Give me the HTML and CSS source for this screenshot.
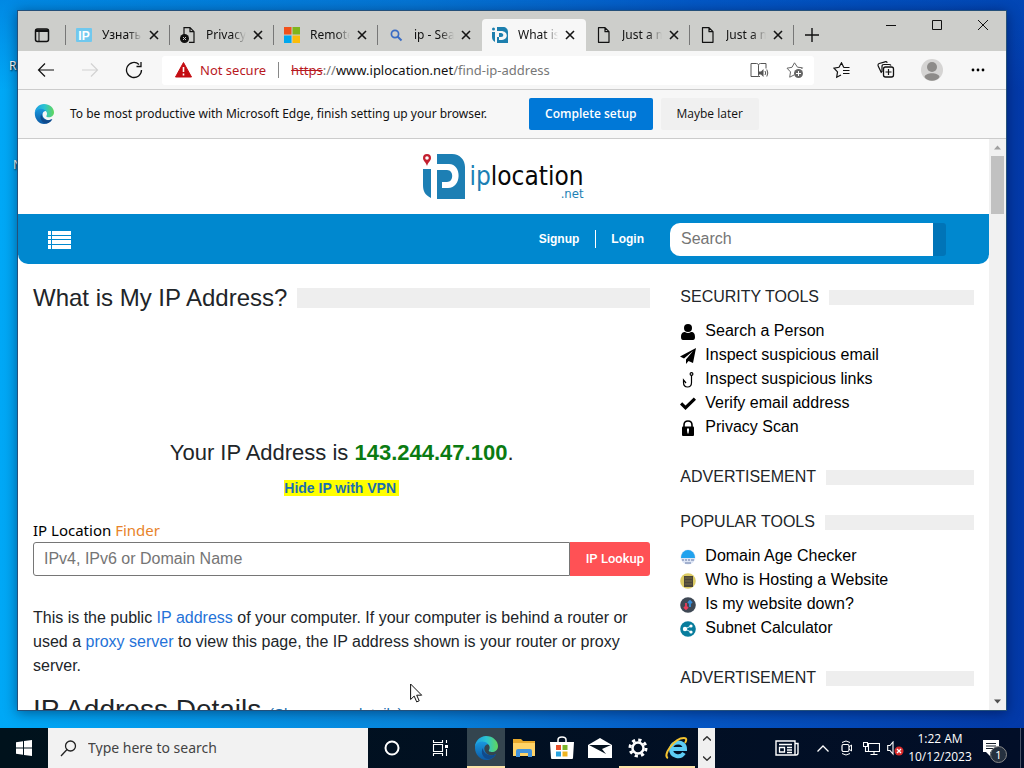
FILE: index.html
```html
<!DOCTYPE html>
<html lang="en">
<head>
<meta charset="utf-8">
<title>What is My IP Address?</title>
<link rel="stylesheet" href="styles.css">
</head>
<body>
<svg class="defs" width="0" height="0" aria-hidden="true">
  <defs>
    <linearGradient id="edge-a" x1="0" y1="0" x2="1" y2="0"><stop offset="0" stop-color="#1b9de2"/><stop offset=".5" stop-color="#2bc3d2"/><stop offset="1" stop-color="#62d75a"/></linearGradient>
    <linearGradient id="edge-b" x1="0" y1="0" x2="0" y2="1"><stop offset="0" stop-color="#1b9de2"/><stop offset="1" stop-color="#0c59a4"/></linearGradient>
  </defs>
  <symbol id="edge" viewBox="0 0 24 24">
    <path fill="url(#edge-b)" d="M1 12c0-5 4-8 8-8 5 0 7 3 7 5-1-1-3-1-4 0-3 2-2 8 3 10 3 1 5 0 7-1-2 4-6 6-10 6C6 24 1 18 1 12z"/>
    <path fill="#114a8b" d="M9 12c-3 4 0 12 7 11 3-1 5-3 6-5-3 2-8 2-11-1-2-2-2-4-2-5z"/>
    <path fill="url(#edge-a)" d="M1 11C1 5 6 0 12 0c7 0 12 5 12 10 0 4-3 6-6 6-2 0-4-1-3-2 1-2 1-4-1-6C10 4 3 5 1 11z"/>
  </symbol>
  <symbol id="close" viewBox="0 0 10 10"><path d="M1 1l8 8M9 1L1 9" fill="none" stroke="#151515" stroke-width="1.6"/></symbol>
  <symbol id="page" viewBox="0 0 16 16"><path d="M2.500 .7h6.500l4 4v10.600h-10.500zM9 .7v4h4" fill="none" stroke="#111" stroke-width="1.2" stroke-linejoin="round"/></symbol>
</svg>

<main class="desktop">
  <span class="shortcut shortcut-first">R</span>
  <span class="shortcut shortcut-second">N</span>

  <section class="window" aria-label="Browser">
    <div class="tabstrip">
      <button class="tab-menu" aria-label="Tab actions"><svg width="16" height="16" viewBox="0 0 16 16"><rect x="1.500" y="2" width="13" height="12.500" rx="2" fill="none" stroke="#111" stroke-width="1.500"/><path d="M1.500 2.500h13v2.500h-13z" fill="#111"/><path d="M5 5v9" stroke="#111"/></svg></button>
      <div class="tabs" role="tablist">
        <div class="tab" role="tab"><svg class="favicon" viewBox="0 0 16 16"><rect y="1" width="16" height="14" rx="1" fill="#70c8ee"/><text x="8" y="12.500" text-anchor="middle" class="favicon-text">IP</text></svg><span class="tab-title">Узнать</span><button class="tab-close" aria-label="Close tab"><svg width="10" height="10"><use href="#close"/></svg></button></div>
        <div class="tab" role="tab"><svg class="favicon" viewBox="0 0 16 16"><path d="M4 8V.7h6l4 4v10.600H9M10 .7v4h4" fill="none" stroke="#111" stroke-width="1.200"/><circle cx="4.500" cy="11.500" r="4.500" fill="#111"/><path d="M3 10l3 3M6 10l-3 3" stroke="#ccc"/></svg><span class="tab-title">Privacy</span><button class="tab-close" aria-label="Close tab"><svg width="10" height="10"><use href="#close"/></svg></button></div>
        <div class="tab" role="tab"><svg class="favicon" viewBox="0 0 16 16"><path fill="#f1511b" d="M0 0h7.500v7.500H0z"/><path fill="#80b51c" d="M8.500 0H16v7.500H8.500z"/><path fill="#00a7ee" d="M0 8.500h7.500V16H0z"/><path fill="#fbbc09" d="M8.500 8.500H16V16H8.500z"/></svg><span class="tab-title">Remote</span><button class="tab-close" aria-label="Close tab"><svg width="10" height="10"><use href="#close"/></svg></button></div>
        <div class="tab before-active" role="tab"><svg class="favicon" viewBox="0 0 16 16"><circle cx="7" cy="7" r="3.600" fill="none" stroke="#3a6cc4" stroke-width="1.700"/><path d="M9.500 9.500l4 4" stroke="#3a6cc4" stroke-width="2"/></svg><span class="tab-title">ip - Search</span><button class="tab-close" aria-label="Close tab"><svg width="10" height="10"><use href="#close"/></svg></button></div>
        <div class="tab active" role="tab" aria-selected="true"><svg class="favicon" viewBox="0 0 16 16"><path fill="#1d7fae" d="M0 5h3v10C1 14 0 12 0 10zM5 0h6c3 0 5 2 5 5v11H5V10h2v3c10 1 10-9 2-9H5z"/><path fill="#1d7fae" d="M7 6h2c3 0 3 4 0 4H7z"/><circle cx="1.500" cy="2" r="1.500" fill="#1d7fae"/></svg><span class="tab-title">What is</span><button class="tab-close" aria-label="Close tab"><svg width="10" height="10"><use href="#close"/></svg></button></div>
        <div class="tab" role="tab"><svg class="favicon"><use href="#page"/></svg><span class="tab-title">Just a moment</span><button class="tab-close" aria-label="Close tab"><svg width="10" height="10"><use href="#close"/></svg></button></div>
        <div class="tab" role="tab"><svg class="favicon"><use href="#page"/></svg><span class="tab-title">Just a moment</span><button class="tab-close" aria-label="Close tab"><svg width="10" height="10"><use href="#close"/></svg></button></div>
      </div>
      <button class="new-tab" aria-label="New tab"><svg width="14" height="14" viewBox="0 0 14 14"><path d="M7 0v14M0 7h14" stroke="#111" stroke-width="1.400"/></svg></button>
      <div class="caption">
        <button aria-label="Minimize"><svg width="10" height="10"><path d="M0 5.500h10" stroke="#111"/></svg></button>
        <button aria-label="Maximize"><svg width="10" height="10"><path d="M.5.5h9v9h-9z" fill="none" stroke="#111"/></svg></button>
        <button aria-label="Close window"><svg width="10" height="10"><path d="M0 0l10 10M10 0L0 10" stroke="#111"/></svg></button>
      </div>
    </div>

    <div class="toolbar">
      <button aria-label="Back"><svg width="18" height="16" viewBox="0 0 18 16"><path d="M17 8H1.500M8 1.500L1.500 8 8 14.500" fill="none" stroke="#111" stroke-width="1.200"/></svg></button>
      <button aria-label="Forward" disabled><svg width="18" height="16" viewBox="0 0 18 16"><path d="M1 8h15.500M10 1.500L16.500 8 10 14.500" fill="none" stroke="#d2d2d2" stroke-width="1.200"/></svg></button>
      <button aria-label="Refresh"><svg width="18" height="18" viewBox="0 0 18 18"><path d="M16.500 9a7.500 7.500 0 1 1-2.500-5.600M16 1v4.500h-4.500" fill="none" stroke="#111" stroke-width="1.300"/></svg></button>
      <div class="address">
        <svg width="17" height="16" viewBox="0 0 17 16"><path d="M8.500.5l8 14.500H.5z" fill="#c40d12" stroke="#c40d12" stroke-linejoin="round"/><path d="M8.500 5v5M8.500 11.500v2" stroke="#fff" stroke-width="1.600"/></svg>
        <span class="not-secure">Not secure</span>
        <div class="url" role="textbox" aria-label="Address" tabindex="0"><s>https</s><span class="dim">://</span>www.iplocation.net<span class="dim">/find-ip-address</span></div>
        <button aria-label="Immersive reader"><svg width="19" height="16" viewBox="0 0 19 16"><path d="M8.500 14.500h-7.500v-13h5.500c1.500 0 2 1 2 2v10c0 1-.5 1-1 1M8.500 3.500c0-1 .5-2 2-2h5.500v5M10 14.500H8.500" fill="none" stroke="#555"/><path d="M9 9.500h2l2.500-2.500v8L11 12.500H9z" fill="#555"/><path d="M15 9q1.500 2 0 4M16.800 7.500q2 3.500 0 7" fill="none" stroke="#555"/></svg></button>
        <button aria-label="Add to favorites"><svg width="18" height="17" viewBox="0 0 18 17"><path d="M15.500 7l1-1.200-5-.6L8.500.8 6 5.300l-5 .9 3.500 3.700-.8 5.300L8 13" fill="none" stroke="#666"/><circle cx="12.500" cy="11.500" r="4.500" fill="#666"/><path d="M12.500 9v5M10 11.500h5" stroke="#fff"/></svg></button>
      </div>
      <div class="tools">
        <button aria-label="Favorites"><svg width="18" height="17" viewBox="0 0 18 17"><path d="M8 13l-4.300 2.200.8-5.300L1 6.200l5-.9L8.500.8l2.200 4.400M10 8.500h6.500M10 11.500h6.500M10.500 5.500h6" fill="none" stroke="#111" stroke-width="1.200"/></svg></button>
        <button aria-label="Collections"><svg width="18" height="18" viewBox="0 0 18 18"><rect x="6.500" y="6" width="10" height="10" rx="2" fill="none" stroke="#111" stroke-width="1.300"/><path d="M11.500 8v6M8.500 11h6M4.500 12L1.200 5q-.6-2 1-2.500L8 .8q1.600-.4 2.300 1M5 11V5.500q0-2 2-2h5q1.500 0 2 1" fill="none" stroke="#111" stroke-width="1.200"/></svg></button>
        <button class="profile" aria-label="Profile"><svg width="22" height="22" viewBox="0 0 22 22"><circle cx="11" cy="11" r="11" fill="#d5d4d3"/><circle cx="11" cy="8" r="5" fill="#8d8b89"/><path d="M3.500 18c1-5 14-5 15 0-3 5-12 5-15 0z" fill="#8d8b89"/></svg></button>
        <button aria-label="Settings and more"><svg width="14" height="4"><circle cx="2" cy="2" r="1.400"/><circle cx="7" cy="2" r="1.400"/><circle cx="12" cy="2" r="1.400"/></svg></button>
      </div>
    </div>

    <div class="infobar">
      <svg width="20" height="20"><use href="#edge"/></svg>
      <p>To be most productive with Microsoft Edge, finish setting up your browser.</p>
      <button class="setup">Complete setup</button>
      <button class="later">Maybe later</button>
    </div>

    <div class="viewport">
      <div class="site">
        <header class="brand">
          <a href="#" class="logo" aria-label="iplocation.net">
            <svg width="42" height="46" viewBox="0 0 42 46"><path fill="#1d7fb4" d="M0 15h8v29C2 41 0 37 0 31zM14 0h15c8 0 13 6 13 13v32H14z"/><path fill="#fff" d="M13 10h13c13 0 13 24-1 24h-6v-6h5c7 0 7-12 0-12H13z"/><path fill="#c31f2f" d="M4 0a4 4 0 0 1 4 4c0 3-3 4-4 8-1-4-4-5-4-8a4 4 0 0 1 4-4z"/><circle cx="4" cy="4" r="1.800" fill="#fff"/></svg>
            <span class="wordmark"><span class="name"><span class="ip">ip</span>location</span><span class="net">.net</span></span>
          </a>
        </header>
        <nav class="nav">
          <button class="menu" aria-label="Menu"><svg width="23" height="18" viewBox="0 0 23 18"><path d="M0 0h3v4H0zM4 0h19v4H4zM0 5h3v3H0zM4 5h19v3H4zM0 9h3v4H0zM4 9h19v4H4zM0 14h3v4H0zM4 14h19v4H4z" fill="#fff"/></svg></button>
          <a href="#" class="signup">Signup</a>
          <a href="#" class="login">Login</a>
          <form class="site-search"><input type="text" placeholder="Search" aria-label="Search"><button type="button" aria-label="Submit search"></button></form>
        </nav>
        <div class="columns">
          <div class="content">
            <h1 class="ruled title">What is My IP Address?</h1>
            <p class="your-ip">Your IP Address is <b>143.244.47.100</b>.</p>
            <p class="vpn"><a href="#">Hide IP with VPN</a></p>
            <label class="finder-label" for="lookup">IP Location <span>Finder</span></label>
            <form class="finder"><input id="lookup" type="text" placeholder="IPv4, IPv6 or Domain Name"><button type="button">IP Lookup</button></form>
            <p class="about">This is the public <a href="#">IP address</a> of your computer. If your computer is behind a router or used a <a href="#">proxy server</a> to view this page, the IP address shown is your router or proxy server.</p>
            <h2 class="details">IP Address Details <a href="#">(Show more details)</a></h2>
          </div>
          <aside class="side">
            <h3 class="ruled">SECURITY TOOLS</h3>
            <ul>
              <li><svg viewBox="0 0 16 16"><circle cx="8" cy="4" r="4"/><path d="M1 13c0-4 2-5 4-5q3 2 6 0c3 0 4 2 4 5q0 3-2 3H3q-2 0-2-3z"/></svg><a href="#">Search a Person</a></li>
              <li><svg viewBox="0 0 16 16"><path d="M16 0L0 8.500l4 2L13 3l-7 8.500V16l2.500-3 4.500 2z"/></svg><a href="#">Inspect suspicious email</a></li>
              <li><svg viewBox="0 0 16 16"><g fill="none" stroke="#000" stroke-width="1.200"><circle cx="11.500" cy="2" r="1.400"/><path d="M11.500 3.500v7c0 6-8 6-8 0V8l2.500 3"/></g></svg><a href="#">Inspect suspicious links</a></li>
              <li><svg viewBox="0 0 16 16"><path d="M0 8.500L2.200 6.200 5.500 9.500 13.800 1.500 16 3.700 5.500 14z"/></svg><a href="#">Verify email address</a></li>
              <li><svg viewBox="0 0 16 16"><path d="M4 7V5q0-4 4-4t4 4v2" fill="none" stroke="#000" stroke-width="1.600"/><rect x="2" y="6.500" width="12" height="9.500" rx="1"/><path d="M7 8.500h2v2l-.5 3h-1l-.5-3z" fill="#fff"/></svg><a href="#">Privacy Scan</a></li>
            </ul>
            <h3 class="ruled after-list">ADVERTISEMENT</h3>
            <h3 class="ruled popular">POPULAR TOOLS</h3>
            <ul>
              <li><svg viewBox="0 0 16 16"><circle cx="8" cy="8" r="7.500" fill="#dde5f5"/><path d="M1 9a7 8 0 0 1 14 0z" fill="#21a2ee"/><path d="M2 11h2m1 0h2m1 0h2m1 0h3M5 14h6" stroke="#667ba6"/></svg><a href="#">Domain Age Checker</a></li>
              <li><svg viewBox="0 0 16 16"><circle cx="8" cy="8" r="7.800" fill="#dccb64"/><path d="M4 3h9v11H4z" fill="#4c4639"/><path d="M5 5h7M5 8h7M5 11h7" stroke="#756a47"/></svg><a href="#">Who is Hosting a Website</a></li>
              <li><svg viewBox="0 0 16 16"><circle cx="8" cy="8" r="7.800" fill="#3e4854"/><path d="M6 6v6M4 10l2 2 2-2" stroke="#ec3d5b" stroke-width="1.800" fill="none"/><path d="M10 10V4M8 6l2-2 2 2" stroke="#368ed9" stroke-width="1.800" fill="none"/></svg><a href="#">Is my website down?</a></li>
              <li><svg viewBox="0 0 16 16"><circle cx="8" cy="8" r="7.800" fill="#087d9d"/><path d="M11 5L5 8l6 3" stroke="#d9f7ff" fill="none"/><circle cx="5" cy="8" r="2.200" fill="#fff"/><circle cx="11" cy="5" r="1.600" fill="#fff"/><circle cx="11" cy="11" r="1.600" fill="#fff"/></svg><a href="#">Subnet Calculator</a></li>
            </ul>
            <h3 class="ruled after-list">ADVERTISEMENT</h3>
          </aside>
        </div>
      </div>
      <div class="scrollbar" aria-hidden="true">
        <svg width="17" height="17"><path d="M5 10.500l3.500-4 3.500 4z" fill="#a0a0a0"/></svg>
        <div class="thumb"></div>
        <svg width="17" height="17"><path d="M5 6.500l3.500 4 3.500-4z" fill="#505050"/></svg>
      </div>
    </div>
  </section>
  <svg class="cursor" width="13" height="20" viewBox="0 0 13 20"><path d="M.6 1v15.500l3.600-3.400 2.500 5.800 2.500-1.100-2.500-5.600h5z" fill="#fff" stroke="#111"/></svg>
</main>

<footer class="taskbar">
  <button class="start" aria-label="Start"><svg width="16" height="16" viewBox="0 0 16 16"><path d="M0 2.200L7 1.200v6.300H0zM8 1l8-1v7.500H8zM0 8.500h7v6.300l-7-1zM8 8.500h8V16l-8-1z" fill="#fff"/></svg></button>
  <label class="task-search"><svg width="17" height="17" viewBox="0 0 17 17"><circle cx="10.500" cy="6" r="5" fill="none" stroke="#222" stroke-width="1.300"/><path d="M7 9.500L1 16" stroke="#222" stroke-width="1.300"/></svg><input type="text" placeholder="Type here to search" aria-label="Type here to search"></label>
  <button class="wide" aria-label="Cortana"><svg width="16" height="16"><circle cx="8" cy="8" r="6.500" fill="none" stroke="#fff" stroke-width="2"/></svg></button>
  <button class="wide" aria-label="Task view"><svg width="17" height="16" viewBox="0 0 17 16"><path d="M1.500 4.500h9v7h-9zM1.500 0v2.500h9V0M1.500 16v-2.500h9V16M14.500 0v3M14.500 9v7" fill="none" stroke="#fff" stroke-width="1.100"/><path d="M13 5h3v3h-3z" fill="#fff"/></svg></button>
  <div class="apps">
    <button class="open current" aria-label="Edge"><svg width="24" height="24"><use href="#edge"/></svg></button>
    <button aria-label="File Explorer"><svg width="22" height="20" viewBox="0 0 22 20"><path d="M0 1h8l2 2h12v15H0z" fill="#e8a92c"/><path d="M0 5h22v13H0z" fill="#ffd367"/><path d="M3 19v-6q0-2 2-2h12q2 0 2 2v6h-4v-4H7v4z" fill="#4293dc"/></svg></button>
    <button aria-label="Store"><svg width="24" height="24" viewBox="0 0 24 24"><path d="M8 6V4q0-3 4-3t4 3v2" fill="none" stroke="#fff" stroke-width="1.500"/><path d="M0 6h24l-1 16q0 1-1 1H2q-1 0-1-1z" fill="#fff"/><path d="M6 9h5v5H6z" fill="#e9502b"/><path d="M12.500 9h5v5h-5z" fill="#7cb42b"/><path d="M6 15.500h5v5H6z" fill="#28a3df"/><path d="M12.500 15.500h5v5h-5z" fill="#eeb421"/></svg></button>
    <button aria-label="Mail"><svg width="24" height="20" viewBox="0 0 24 20"><path d="M0 7l12-7 12 7v13H0z" fill="#fff"/><path d="M1 7h22l-9 4 4 5z" fill="#061320"/></svg></button>
    <button class="open" aria-label="Settings"><svg width="20" height="20" viewBox="0 0 20 20"><circle cx="10" cy="10" r="5.500" fill="none" stroke="#fff" stroke-width="2.500"/><circle cx="10" cy="10" r="8" fill="none" stroke="#fff" stroke-width="3" stroke-dasharray="3.200 3.080"/></svg></button>
    <button class="open" aria-label="Internet Explorer"><svg width="24" height="24" viewBox="0 0 24 24"><path d="M20 17c-4 6-13 3-13-4 0-8 14-9 14 0H9" fill="none" stroke="#5dcdf4" stroke-width="4"/><path d="M4 22C-2 20 10 2 20 2q4 0 1 5" fill="none" stroke="#f4c430" stroke-width="2"/></svg></button>
  </div>
  <div class="spinner"><button aria-label="Scroll up"><svg width="8" height="5"><path d="M0 4.500L4 .8l4 3.700" fill="none" stroke="#333" stroke-width="1.500"/></svg></button><button aria-label="Scroll down"><svg width="8" height="5"><path d="M0 .5l4 3.700L8 .5" fill="none" stroke="#333" stroke-width="1.500"/></svg></button></div>
  <div class="tray">
    <button class="news" aria-label="News"><svg width="24" height="16" viewBox="0 0 24 16"><path d="M1 1h19v14H1zM20 3.500h3V13q0 2-2 2h-2" fill="none" stroke="#fff" stroke-width="1.400"/><path d="M4 4.500h13M12 7.500h5M12 10h5M12 12.500h5M4.500 7.500h5v4.500h-5z" fill="none" stroke="#fff" stroke-width="1.300"/></svg></button>
    <button aria-label="Show hidden icons"><svg width="12" height="7"><path d="M.5 6.500L6 1l5.500 5.500" fill="none" stroke="#fff" stroke-width="1.300"/></svg></button>
    <button aria-label="Meet now"><svg width="14" height="16" viewBox="0 0 14 16"><rect x="2" y="4.500" width="7" height="7" rx="1.500" fill="none" stroke="#fff" stroke-width="1.200"/><path d="M9 7l2.500-2v6L9 9M2 2.500q4-3 8 0M2 13.500q4 3 8 0" fill="none" stroke="#fff"/></svg></button>
    <button aria-label="Network"><svg width="17" height="15" viewBox="0 0 17 15"><path d="M5.500 2.500h11v8h-11zM11 10.500v3M7.500 13.500h7M.5 1.500h4v4h-4zM2.500 5.500v5h3" fill="none" stroke="#fff" stroke-width="1.100"/></svg></button>
    <button aria-label="Volume"><svg width="17" height="15" viewBox="0 0 17 15"><path d="M.7 4.500h2.300l3-3.500v12L3 9.500H.7z" fill="none" stroke="#fff" stroke-width="1.100"/><circle cx="12" cy="10" r="4.500" fill="#d92a2a"/><path d="M10 8l4 4M14 8l-4 4" stroke="#fff" stroke-width="1.300"/></svg></button>
    <time class="clock"><span>1:22 AM</span><span>10/12/2023</span></time>
    <button class="notices" aria-label="Notifications"><svg width="17" height="16" viewBox="0 0 17 16"><path d="M0 0h16v12H7v4l-4-4H0z" fill="#fff"/><path d="M3 3.500h10M3 6h10M3 8.500h7" stroke="#17202c"/></svg><span class="badge">1</span></button>
  </div>
</footer>
</body>
</html>
```
FILE: styles.css
```css
* { box-sizing: border-box; }
body {
  margin: 0;
  height: 100vh;
  display: flex;
  flex-direction: column;
  overflow: hidden;
  font: 12px/16px "Noto Sans", sans-serif;
  color: #111;
}
button, input { font: inherit; color: inherit; border: 0; margin: 0; padding: 0; background: none; }
button { display: flex; align-items: center; justify-content: center; flex: none; }
h1, h2, h3, p, ul { margin: 0; padding: 0; font-weight: normal; }
a { color: inherit; text-decoration: none; }
svg { display: block; flex: none; }
.defs { position: absolute; }

.desktop {
  flex: 1;
  min-height: 0;
  position: relative;
  display: flex;
  padding: 10px 17px 17px;
  background:
    linear-gradient(180deg, rgba(0, 90, 200, .4), transparent 90px),
    linear-gradient(90deg, #00a8f6 0, #0886dc 40%, #0556c4 68%, #0339a8 100%);
}
.shortcut { position: absolute; color: #fff; text-shadow: 1px 1px 2px #000; }
.shortcut-first { left: 9px; top: 58px; }
.shortcut-second { left: 13px; top: 157px; }
.window {
  position: relative;
  flex: 1;
  min-width: 0;
  display: flex;
  flex-direction: column;
  border: 1px solid #24507a;
  background: #fff;
  box-shadow: 0 2px 12px rgba(0, 0, 30, .45);
}
.tabstrip { flex: none; display: flex; height: 40px; background: #cdcecb; }
.tab-menu { width: 47px; padding-top: 8px; }
.tabs { display: flex; align-items: flex-end; border-left: 1px solid transparent; }
.tab { display: flex; align-items: center; width: 104px; height: 32px; padding: 0 11px 0 10px; position: relative; }
.tab::after { content: ""; position: absolute; right: 0; top: 6px; width: 1px; height: 20px; background: #777; }
.tab:first-child::before { content: ""; position: absolute; left: -1px; top: 6px; width: 1px; height: 20px; background: #777; }
.tab.before-active::after, .tab.active::after { display: none; }
.tab.active { background: #f7f7f7; border-radius: 4px 4px 0 0; }
.favicon { width: 16px; height: 16px; }
.favicon-text { font: bold 12px "Liberation Sans", sans-serif; fill: #fff; }
.tab-title {
  flex: 1;
  margin: 0 7px 0 10px;
  overflow: hidden;
  white-space: nowrap;
  -webkit-mask-image: linear-gradient(90deg, #000 65%, transparent);
  mask-image: linear-gradient(90deg, #000 65%, transparent);
}
.new-tab { width: 36px; padding-top: 8px; }
.caption { display: flex; margin-left: auto; height: 28px; }
.caption button { width: 46px; }

.toolbar { flex: none; display: flex; align-items: center; height: 39px; padding-left: 6px; background: #f7f7f7; border-bottom: 1px solid #ccc; }
.toolbar > button { width: 44px; height: 30px; }
.address { flex: 1; min-width: 0; display: flex; align-items: center; height: 29px; margin-left: 6px; padding: 0 1px 0 13px; background: #fff; border-radius: 3px; font-size: 13px; }
.address button { width: 36px; height: 28px; }
.not-secure { margin-left: 8px; padding-right: 12px; color: #b8191e; border-right: 1px solid #888; white-space: nowrap; }
.url { flex: 1; padding-left: 12px; white-space: nowrap; }
.url s { color: #b8191e; }
.dim { color: #777; }
.tools { display: flex; padding: 0 6px; }
.tools button { width: 44px; }
.tools .profile { width: 48px; }

.infobar { flex: none; display: flex; align-items: center; height: 49px; padding: 0 16px; background: #f7f7f7; border-bottom: 1px solid #ccc; }
.infobar p { margin: 0 42px 0 16px; white-space: nowrap; }
.infobar button { height: 32px; padding: 0 16px; border-radius: 2px; white-space: nowrap; font-family: "Open Sans", sans-serif; font-weight: 600; }
.infobar .setup { background: #0078d7; color: #fff; }
.infobar .later { margin-left: 8px; background: #f0f0f0; font-weight: 500; }

.viewport { flex: 1; min-height: 0; display: flex; }
.site { flex: 1; min-width: 0; overflow: hidden; font: 16px/24px "Liberation Sans", Arial, sans-serif; color: #212529; }
.scrollbar { display: flex; flex-direction: column; width: 17px; background: #f1f1f1; }
.thumb { height: 58px; margin: 0 2px auto; background: #c1c1c1; }

.brand { display: flex; justify-content: center; padding: 15px 0 14px; }
.logo { display: flex; gap: 4px; }
.wordmark { display: flex; flex-direction: column; align-items: flex-end; padding-top: 8px; font-family: "DejaVu Sans Condensed", "DejaVu Sans", sans-serif; font-stretch: condensed; color: #080808; }
.name { font-size: 26px; line-height: 28px; }
.net { font-size: 13px; line-height: 8px; color: #1d7fb4; }
.ip { color: #1d7fb4; }
.nav { display: flex; align-items: center; height: 50px; padding: 0 43px 0 30px; background: #0088cf; border-radius: 0 0 10px 10px; color: #fff; }
.menu { margin-right: auto; padding-top: 2px; }
.signup, .login { font-size: 12px; line-height: 18px; font-weight: bold; }
.signup { padding-right: 16px; border-right: 1px solid #fff; }
.login { padding-left: 15px; }
.site-search { display: flex; width: 276px; height: 33px; margin-left: 26px; }
.site-search input { flex: 1; min-width: 0; padding: 0 11px; background: #fff; border-radius: 10px 0 0 10px; color: #333; }
.site-search button { width: 13px; background: #0074b7; border-radius: 0 3px 3px 0; }
input::placeholder { color: #757575; opacity: 1; }

.columns { display: grid; grid-template-columns: 2fr 1fr; }
.content, .side { min-width: 0; padding: 0 15px; }
.ruled { display: flex; align-items: center; gap: 10px; white-space: nowrap; }
.ruled::after { content: ""; flex: 1; height: 15px; background: #eee; }
.title { padding-top: 18px; font-size: 24px; line-height: 32px; }
.title::after { height: 20px; }
.your-ip { margin-top: 123px; font-size: 22px; line-height: 32px; text-align: center; }
.your-ip b { color: #0b7b12; }
.vpn { margin-top: 7px; text-align: center; font-size: 14px; font-weight: bold; }
.vpn a { background: #ff0; color: #1a6fb0; padding-right: 3px; }
.finder-label { display: block; margin-top: 18px; font: 15px/24px "Noto Sans", sans-serif; color: #000; }
.finder-label span { color: #e8832a; }
.finder { display: flex; height: 34px; }
.finder input { flex: 1; min-width: 0; padding: 0 10px; border: 1px solid #767676; border-radius: 3px 0 0 3px; }
.finder button { width: 80px; padding-left: 9px; background: #ff5155; border-radius: 0 3px 3px 0; color: #fff; font: 500 13px/24px Roboto, sans-serif; }
.about { margin-top: 30px; }
.about a { color: #2472d8; }
.details { margin-top: 14px; font-size: 28px; line-height: 36px; white-space: nowrap; }
.details a { font-size: 15px; color: #1a6fb0; }

.side h3 { font-size: 16px; line-height: 24px; }
.side h3:first-child { margin-top: 21px; }
.side ul { list-style: none; padding-top: 10px; }
.side li { display: flex; align-items: center; gap: 9px; color: #000; }
.side li svg { width: 16px; height: 16px; margin-top: 2px; }
.side .after-list { margin-top: 26px; }
.side .popular { margin-top: 21px; }
.cursor { position: absolute; left: 410px; top: 683px; }

.taskbar { flex: none; display: flex; height: 40px; background: linear-gradient(90deg, #00121c, #020e28); color: #fff; }
.start { width: 48px; }
.task-search { display: flex; align-items: center; gap: 11px; width: 320px; padding: 0 12px; background: #f2f2f2; color: #333; }
.task-search input { flex: 1; min-width: 0; font-size: 14px; }
.task-search input::placeholder { color: #444; }
.wide { width: 48px; }
.apps { display: flex; padding-left: 3px; }
.apps button { width: 38px; border-bottom: 2px solid transparent; padding-top: 2px; }
.apps .open { border-bottom-color: #fbe3a8; }
.apps .current { background: #34454f; }
.spinner { display: flex; flex-direction: column; width: 17px; margin-left: 3px; background: #f0f0f0; }
.spinner button { flex: 1; }
.tray { display: flex; align-items: stretch; margin-left: auto; }
.tray button { width: 24px; }
.tray .news { width: 48px; }
.clock { display: flex; flex-direction: column; justify-content: center; align-items: center; width: 66px; font-family: "Open Sans", sans-serif; line-height: 18px; }
.tray .notices { position: relative; width: 48px; margin-right: 3px; padding-right: 10px; border-right: 1px solid #4a5366; }
.badge { position: absolute; left: 17px; top: 18px; width: 17px; height: 17px; border: 1px solid #888; border-radius: 50%; background: #25303f; font-size: 11px; line-height: 15px; text-align: center; }
```
